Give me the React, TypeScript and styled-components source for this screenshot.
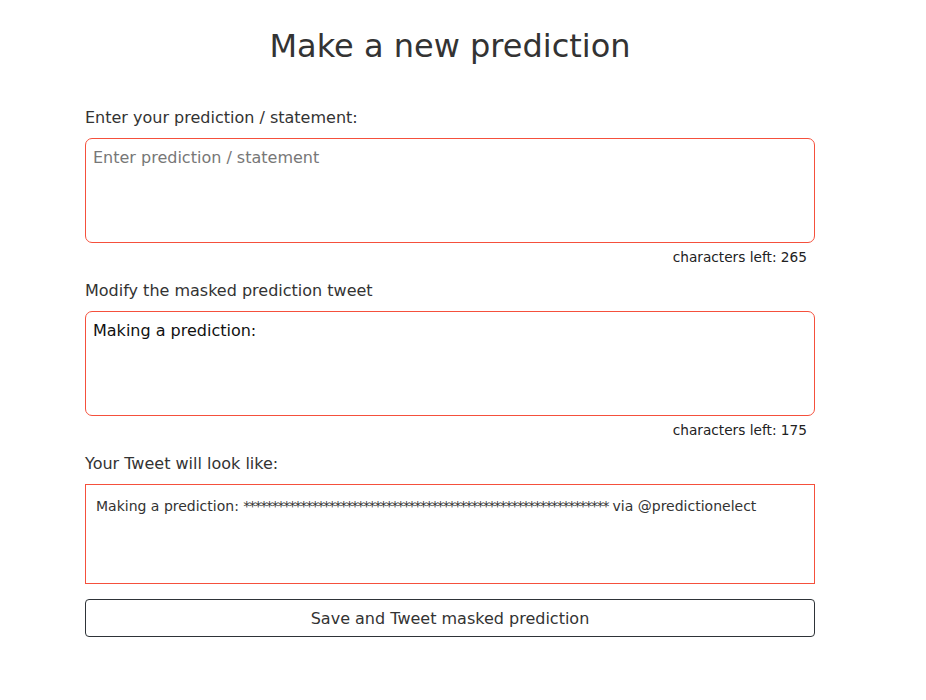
import { useState } from "react";
import { styled, createGlobalStyle } from "styled-components";

const MAX_STATEMENT = 265;
const MAX_TWEET = 280;
const SUFFIX = "via @predictionelect";

export default function App() {
  const [statement, setStatement] = useState("");
  const [tweet, setTweet] = useState("Making a prediction:");

  const masked = "*".repeat(64);
  const tweetLeft = MAX_TWEET - 105 - (tweet.length - 20);

  return (
    <>
      <GlobalStyle />
      <StyledPage>
        <StyledTitle>Make a new prediction</StyledTitle>
        <StyledForm>
          <StyledLabel htmlFor="statement">Enter your prediction / statement:</StyledLabel>
          <StyledTextarea
            id="statement"
            placeholder="Enter prediction / statement"
            value={statement}
            onChange={(e) => setStatement(e.target.value)}
          />
          <StyledCounter>characters left: {MAX_STATEMENT - statement.length}</StyledCounter>

          <StyledLabel htmlFor="tweet">Modify the masked prediction tweet</StyledLabel>
          <StyledTextarea
            id="tweet"
            value={tweet}
            onChange={(e) => setTweet(e.target.value)}
          />
          <StyledCounter>characters left: {tweetLeft}</StyledCounter>

          <StyledLabel as="div">Your Tweet will look like:</StyledLabel>
          <StyledPreview>
            {tweet} <StyledMask>{masked}</StyledMask> {SUFFIX}
          </StyledPreview>

          <StyledButton type="button">Save and Tweet masked prediction</StyledButton>
        </StyledForm>
      </StyledPage>
    </>
  );
}

const GlobalStyle = createGlobalStyle`
  body {
    margin: 0;
    background: #fff;
    font-family: "DejaVu Sans", "Noto Sans", sans-serif;
    color: #333;
  }
`;

const StyledPage = styled.div`
  width: 730px;
  padding: 22px 0 40px 85px;
`;

const StyledTitle = styled.h1`
  margin: 0 0 38px;
  text-align: center;
  font-size: 32px;
  font-weight: 400;
  color: #333;
  line-height: 48px;
`;

const StyledForm = styled.form`
  display: flex;
  flex-direction: column;
`;

const StyledLabel = styled.label`
  font-size: 16px;
  line-height: 20px;
  color: #333;
  margin-bottom: 10px;
`;

const StyledTextarea = styled.textarea`
  box-sizing: border-box;
  height: 105px;
  width: 100%;
  resize: none;
  padding: 9px 7px;
  border: 1px solid #f5503c;
  border-radius: 7px;
  font-family: "DejaVu Sans", "Noto Sans", sans-serif;
  font-size: 16px;
  line-height: 20px;
  color: #111;
  outline: none;
  &::placeholder {
    color: #777;
  }
`;

const StyledCounter = styled.div`
  align-self: flex-end;
  margin: 5px 8px 15px 0;
  font-size: 13.7px;
  line-height: 18px;
  color: #222;
`;

const StyledPreview = styled.div`
  box-sizing: border-box;
  height: 100px;
  padding: 12px 10px;
  border: 1px solid #f5503c;
  font-size: 14px;
  line-height: 18px;
  color: #333;
  word-break: break-word;
`;

const StyledMask = styled.span`
  letter-spacing: -1.3px;
`;

const StyledButton = styled.button`
  margin-top: 15px;
  height: 38px;
  border: 1px solid #2e3338;
  border-radius: 4px;
  background: #fff;
  font-family: "DejaVu Sans", "Noto Sans", sans-serif;
  font-size: 16px;
  color: #333;
  cursor: pointer;
`;
